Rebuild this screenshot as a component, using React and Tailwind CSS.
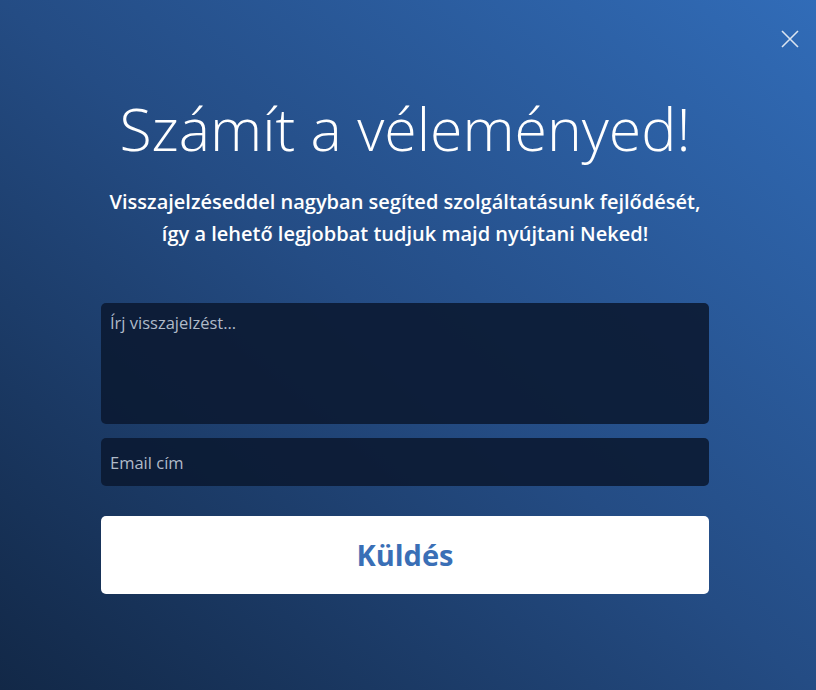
export default function App() {
  return (
    <div
      className="relative flex h-[690px] w-full flex-col items-center bg-gradient-to-tr from-[#122847] via-[#244c84] to-[#316cb8] pr-[6px] text-white"
      style={{ fontFamily: '"Open Sans", "Liberation Sans", sans-serif' }}
    >
      {/* close */}
      <button className="absolute right-[17px] top-[30px] flex h-[18px] w-[18px] items-center justify-center text-[#dbe4f0]">
        <svg viewBox="0 0 18 18" className="h-[18px] w-[18px]" fill="none" stroke="currentColor" strokeWidth="1.6">
          <path d="M1 1 L17 17 M17 1 L1 17" />
        </svg>
      </button>

      <h1 className="mt-[88px] text-[59px] font-light leading-[80px]">
        Számít a véleményed!
      </h1>
      <p className="mt-[18px] text-center text-[20px] font-semibold leading-[32px]">
        Visszajelzéseddel nagyban segíted szolgáltatásunk fejlődését,
        <br />
        így a lehető legjobbat tudjuk majd nyújtani Neked!
      </p>

      <form className="mt-[53px] flex w-[608px] flex-col">
        <textarea
          placeholder="Írj visszajelzést..."
          className="h-[121px] w-full resize-none rounded-[5px] bg-[#0b1a32]/90 px-[9px] py-[8px] text-[16.5px] text-white placeholder:text-[#b0bac8] outline-none"
        />
        <input
          placeholder="Email cím"
          className="mt-[14px] h-[48px] w-full rounded-[5px] bg-[#0b1a32]/90 px-[9px] text-[16.5px] text-white placeholder:text-[#b0bac8] outline-none"
        />
        <button
          type="button"
          className="mt-[30px] h-[78px] w-full rounded-[5px] bg-white text-[29px] font-bold text-[#3a6fb6]"
        >
          Küldés
        </button>
      </form>
    </div>
  )
}
